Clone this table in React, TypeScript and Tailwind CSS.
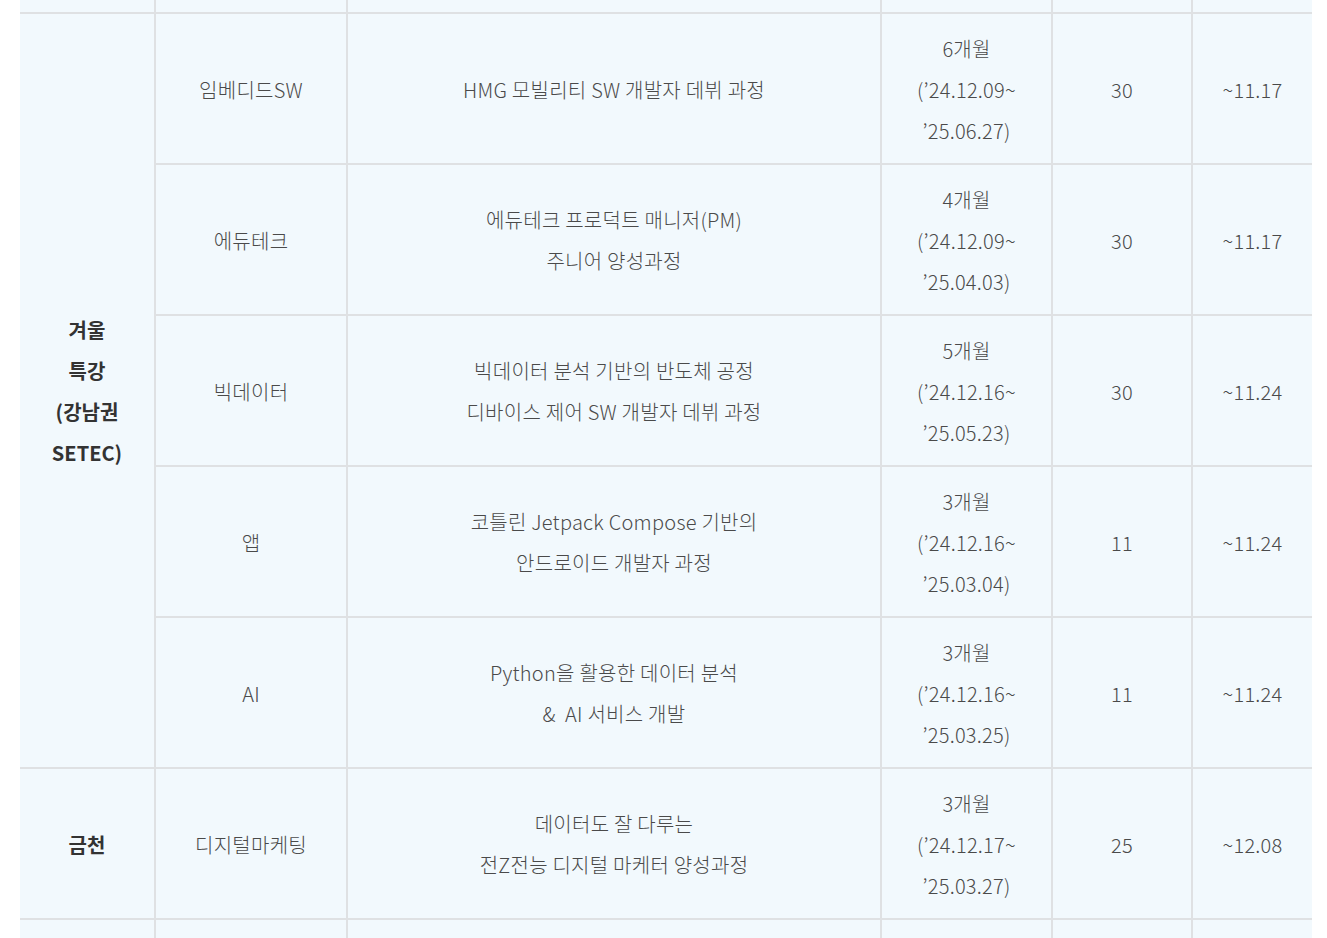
import React from "react";

type Row = { cat: string; title: string[]; period: string[]; n: string; due: string };

const winter: Row[] = [
  { cat: "임베디드SW", title: ["HMG 모빌리티 SW 개발자 데뷔 과정"], period: ["6개월", "(’24.12.09~", "’25.06.27)"], n: "30", due: "~11.17" },
  { cat: "에듀테크", title: ["에듀테크 프로덕트 매니저(PM)", "주니어 양성과정"], period: ["4개월", "(’24.12.09~", "’25.04.03)"], n: "30", due: "~11.17" },
  { cat: "빅데이터", title: ["빅데이터 분석 기반의 반도체 공정", "디바이스 제어 SW 개발자 데뷔 과정"], period: ["5개월", "(’24.12.16~", "’25.05.23)"], n: "30", due: "~11.24" },
  { cat: "앱", title: ["코틀린 Jetpack Compose 기반의", "안드로이드 개발자 과정"], period: ["3개월", "(’24.12.16~", "’25.03.04)"], n: "11", due: "~11.24" },
  { cat: "AI", title: ["Python을 활용한 데이터 분석", "&\u00a0 AI 서비스 개발"], period: ["3개월", "(’24.12.16~", "’25.03.25)"], n: "11", due: "~11.24" },
];

const geumcheon: Row = {
  cat: "디지털마케팅",
  title: ["데이터도 잘 다루는", "전Z전능 디지털 마케터 양성과정"],
  period: ["3개월", "(’24.12.17~", "’25.03.27)"],
  n: "25",
  due: "~12.08",
};

const cell = "bg-[#f2f9fd] flex flex-col items-center justify-center text-center pt-[1px]";

function Lines({ lines }: { lines: string[] }) {
  return (
    <>
      {lines.map((l, i) => (
        <div key={i} className="whitespace-pre">{l}</div>
      ))}
    </>
  );
}

function RowCells({ r }: { r: Row }) {
  return (
    <>
      <div className={cell}>{r.cat}</div>
      <div className={cell}><Lines lines={r.title} /></div>
      <div className={cell}><Lines lines={r.period} /></div>
      <div className={cell}>{r.n}</div>
      <div className={cell}>{r.due}</div>
    </>
  );
}

export default function App() {
  return (
    <div className="w-[1327px] h-[938px] overflow-hidden bg-white">
      <div
        className="ml-[20px] w-[1292px] grid grid-cols-[134px_190px_532px_169px_138px_119px] grid-rows-[12px_repeat(6,149px)_40px] gap-[2px] bg-[#dfe1e3] text-[20px] leading-[41px] font-light tracking-[0.25px] text-[#4a4a4a]"
        style={{ fontFamily: '"Noto Sans CJK KR", "Noto Sans", sans-serif' }}
      >
        {Array.from({ length: 6 }).map((_, i) => (
          <div key={"t" + i} className="bg-[#f2f9fd]" />
        ))}
        <div className={`${cell} row-span-5 font-bold tracking-normal text-[#333]`}>
          <div>겨울</div>
          <div>특강</div>
          <div>(강남권</div>
          <div>SETEC)</div>
        </div>
        {winter.map((r, i) => (
          <RowCells key={i} r={r} />
        ))}
        <div className={`${cell} font-bold tracking-normal text-[#333]`}>금천</div>
        <RowCells r={geumcheon} />
        {Array.from({ length: 6 }).map((_, i) => (
          <div key={"b" + i} className="bg-[#f2f9fd]" />
        ))}
      </div>
    </div>
  );
}
